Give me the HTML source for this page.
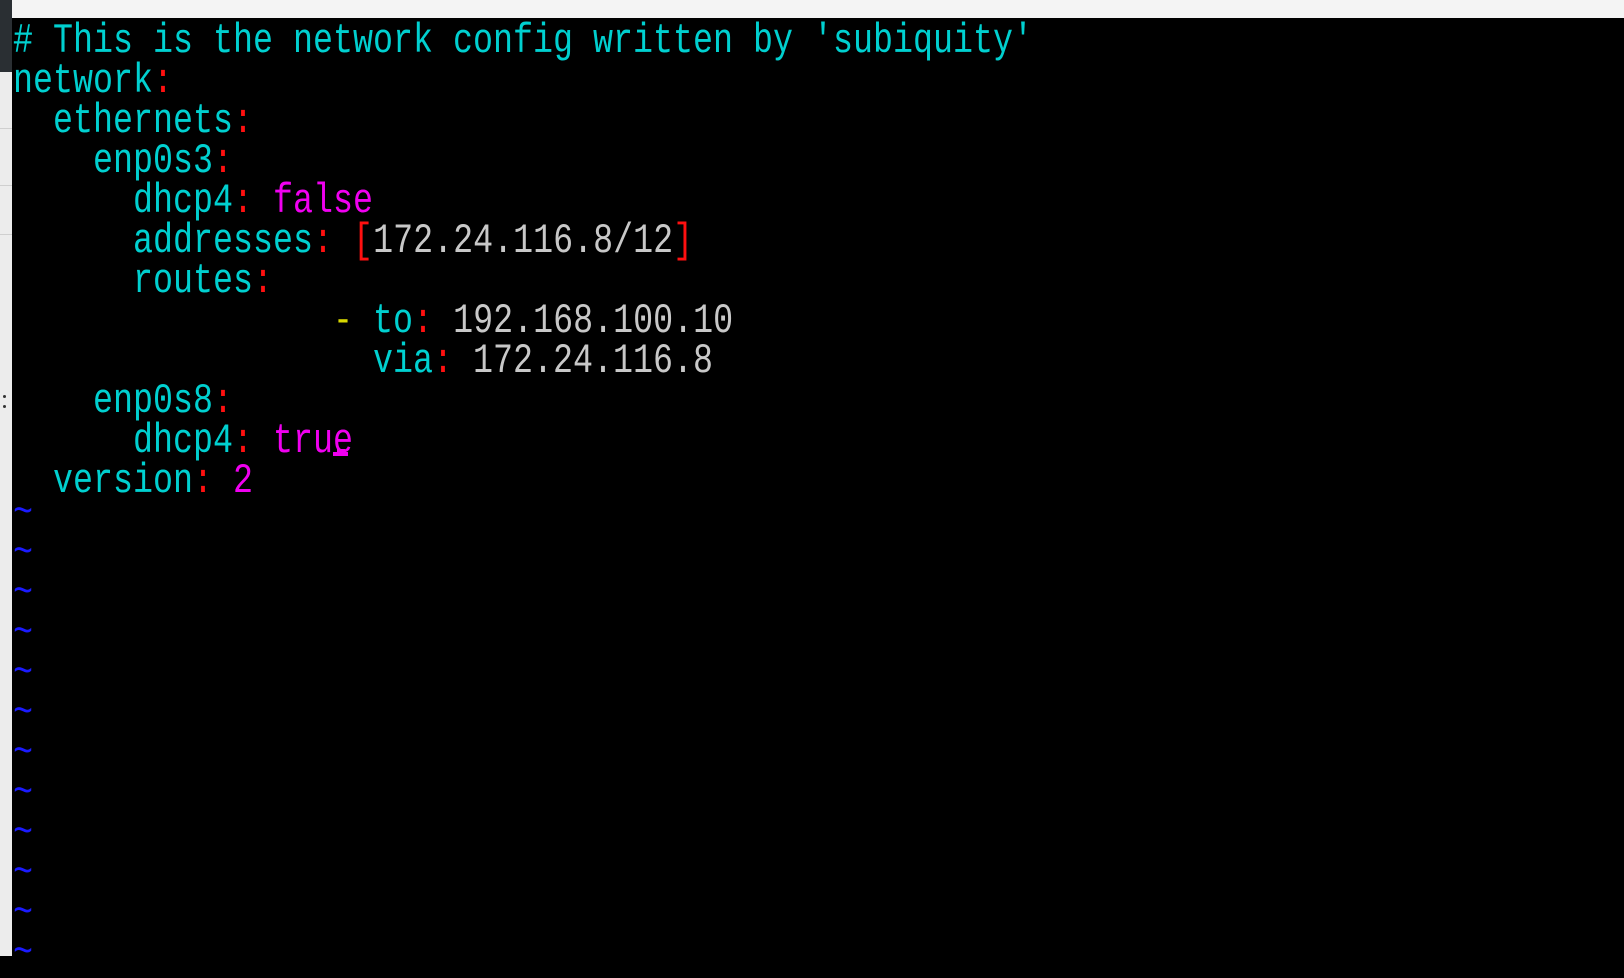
<!DOCTYPE html>
<html><head><meta charset="utf-8"><style>
html,body{margin:0;padding:0;width:1624px;height:956px;overflow:hidden;background:#000;}
#bar{position:absolute;left:0;top:0;width:1624px;height:18px;background:#f4f4f4;}
#side{position:absolute;left:0;top:18px;width:12px;height:938px;background:#ececec;}
#sidetop{position:absolute;left:0;top:0;width:12px;height:72px;background:#2a2f33;}
.hl{position:absolute;left:0;width:12px;height:1px;background:#cfcfcf;}
#term{position:absolute;left:12px;top:18px;width:1612px;height:938px;background:#000;}
pre{position:absolute;left:13px;top:22px;margin:0;font-family:"Liberation Mono",monospace;font-size:33.33px;line-height:32px;transform:scaleY(1.25);transform-origin:0 0;color:#00d0d0;}
.r{color:#ff1010}.m{color:#f000f0}.w{color:#c8c8c8}.y{color:#d8d800}.b{color:#1a1aff}
.dot{position:absolute;left:3px;width:3px;height:3px;background:#333;border-radius:50%;}
</style></head><body>
<div id="bar"></div>
<div id="side"></div>
<div id="sidetop"></div>
<div class="hl" style="top:128px"></div>
<div class="hl" style="top:185px"></div>
<div class="hl" style="top:234px"></div>
<div class="dot" style="top:395px"></div>
<div class="dot" style="top:405px"></div>
<div id="term"></div>
<pre># This is the network config written by 'subiquity'
network<span class="r">:</span>
  ethernets<span class="r">:</span>
    enp0s3<span class="r">:</span>
      dhcp4<span class="r">:</span> <span class="m">false</span>
      addresses<span class="r">:</span> <span class="r">[</span><span class="w">172.24.116.8/12</span><span class="r">]</span>
      routes<span class="r">:</span>
                <span class="y">-</span> to<span class="r">:</span> <span class="w">192.168.100.10</span>
                  via<span class="r">:</span> <span class="w">172.24.116.8</span>
    enp0s8<span class="r">:</span>
      dhcp4<span class="r">:</span> <span class="m">true</span>
  version<span class="r">:</span> <span class="m">2</span></pre>
<pre style="top:494px" class="b">~
~
~
~
~
~
~
~
~
~
~
~</pre>
<div style="position:absolute;left:333px;top:452px;width:15px;height:4px;background:#f000f0"></div>
<div style="position:absolute;left:337px;top:449px;width:8px;height:3px;background:#f000f0"></div>
</body></html>
